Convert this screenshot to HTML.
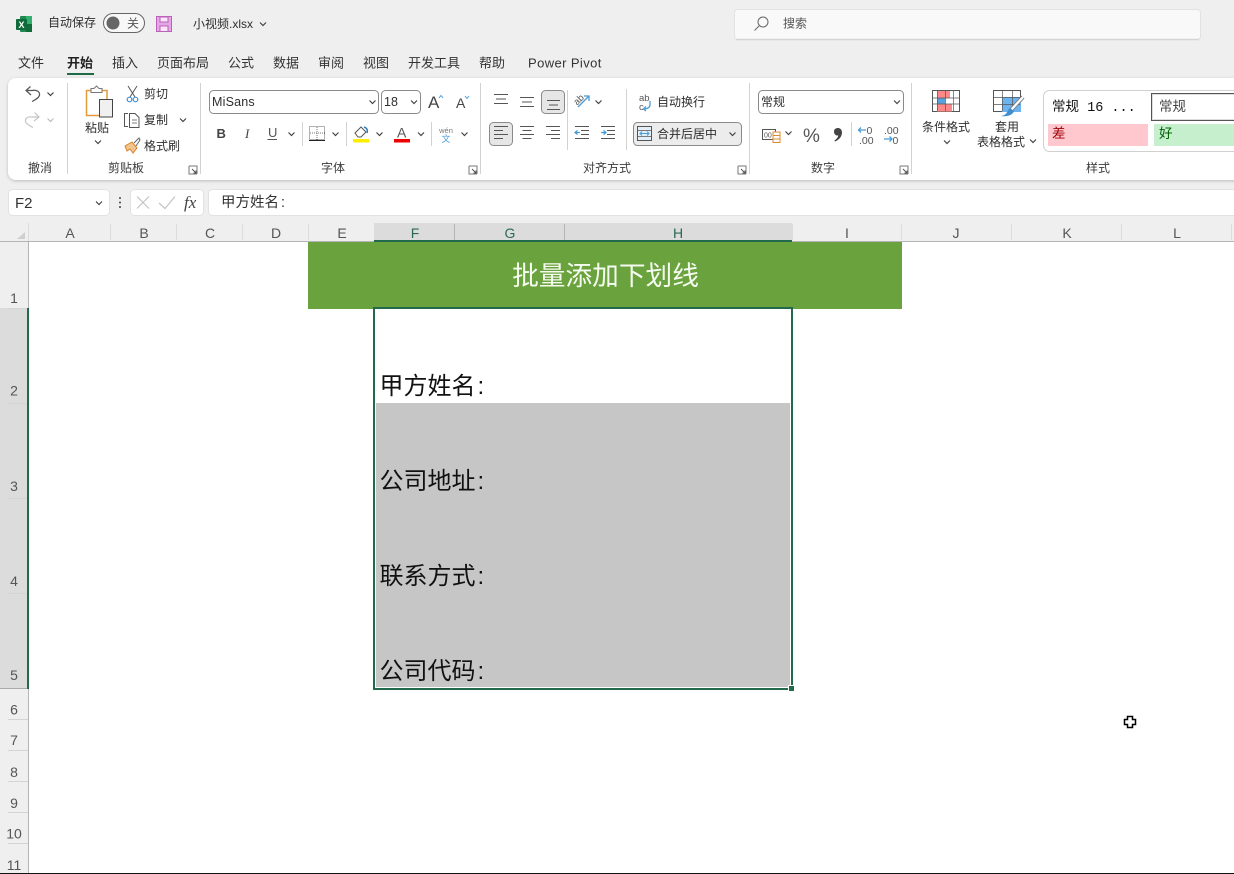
<!DOCTYPE html>
<html lang="zh">
<head>
<meta charset="utf-8">
<title>小视频.xlsx</title>
<style>
html,body{margin:0;padding:0;width:1234px;height:874px;overflow:hidden;background:#efefef}
svg{display:block}
text{font-family:"Liberation Sans","Noto Sans CJK SC",sans-serif;fill:#2e2e2e;font-size:12px;white-space:pre}
.m{font-size:13px;fill:#333}
.g{font-size:12px;fill:#3c3c3c;text-anchor:middle}
.c{font-size:14px;fill:#555;text-anchor:middle}
.s{fill:#2a6a50}
.r{font-size:14px;fill:#555;text-anchor:middle}
.l{fill:none;stroke:#555;stroke-width:1}
.b{fill:none;stroke:#4a9bd8;stroke-width:1.3}
.sep{stroke:#d2d2d2;stroke-width:1}
.big{font-size:24px;fill:#111}
</style>
</head>
<body>
<svg width="1234" height="874" viewBox="0 0 1234 874" xmlns="http://www.w3.org/2000/svg">
<defs>
<path id="ch" d="M-3-1.500 0 1.500 3-1.500" fill="none" stroke="#444" stroke-width="1.200"/>
<path id="lc" d="M-3-1.500 0 1.500 3-1.500" fill="none" stroke="#bbb" stroke-width="1.200"/>
<g id="lau"><path d="M0 0H8V8M0 0V8H8" fill="none" stroke="#777"/><path d="M3 3 7 7M4.500 7H7V4.500" fill="none" stroke="#555"/></g>
<filter id="sh" x="-2%" y="-10%" width="104%" height="125%"><feDropShadow dx="0" dy="1" stdDeviation="1.500" flood-color="#000" flood-opacity=".22"/></filter>
</defs>
<rect width="1234" height="874" fill="#efefef"/>

<!-- title bar -->
<rect x="20" y="16" width="12" height="16" rx="1" fill="#1f8a4f"/>
<rect x="26" y="16" width="6" height="8" fill="#33b070"/>
<rect x="26" y="24" width="6" height="8" fill="#106a3a"/>
<rect x="16" y="19" width="11" height="11" rx="1" fill="#0f6b3c"/>
<text x="18.500" y="28" style="font-size:9px;font-weight:bold;fill:#fff">X</text>
<text x="48" y="26.500">自动保存</text>
<rect x="103.500" y="13.500" width="41" height="19" rx="9.500" fill="#f8f8f8" stroke="#666"/>
<circle cx="113" cy="23" r="6.500" fill="#666"/>
<text x="127" y="27.500" style="font-size:12px;fill:#555">关</text>
<rect x="156.500" y="16.500" width="15" height="15" fill="#e4a6e4" stroke="#bb60bb"/>
<rect x="160" y="17" width="8" height="5" fill="#f8e6f8" stroke="#bb60bb"/>
<rect x="160" y="26" width="8" height="5.500" fill="#f8e6f8" stroke="#bb60bb"/>
<text x="193" y="28" style="font-size:12px">小视频.xlsx</text>
<use href="#ch" x="263" y="24"/>

<rect x="734.500" y="9.500" width="466" height="30" rx="3" fill="#f9f9f9" stroke="#e2e2e2"/>
<path d="M736 39.500H1199" stroke="#d4d4d4" stroke-width="1.500"/>
<circle cx="763" cy="22" r="5" fill="none" stroke="#666"/>
<path d="M759 26 754.500 30.500" stroke="#666"/>
<text x="783" y="27.500" style="fill:#555">搜索</text>

<!-- menu -->
<text class="m" x="18" y="67.500">文件</text>
<text class="m" x="67" y="67.500" style="font-weight:bold;fill:#222">开始</text>
<rect x="67" y="73" width="27" height="2" fill="#1e6b46"/>
<text class="m" x="112" y="67.500">插入</text>
<text class="m" x="157" y="67.500">页面布局</text>
<text class="m" x="228" y="67.500">公式</text>
<text class="m" x="273" y="67.500">数据</text>
<text class="m" x="318" y="67.500">审阅</text>
<text class="m" x="363" y="67.500">视图</text>
<text class="m" x="408" y="67.500">开发工具</text>
<text class="m" x="479" y="67.500">帮助</text>
<text class="m" x="528" y="67.500" style="letter-spacing:.4px">Power Pivot</text>

<!-- ribbon -->
<rect x="8" y="78" width="1240" height="102" rx="8" fill="#fff" filter="url(#sh)"/>
<path class="sep" d="M67.500 83V174M200.500 83V174M480.500 83V174M749.500 83V174M911.500 83V174"/>

<!-- undo -->
<path d="M30.500 86.500 26 90.500 31 95M26 90.500H32C37 89.500 40 92 39.500 95 39 98 35 100 32 101.500" fill="none" stroke="#555" stroke-width="1.200"/>
<use href="#ch" x="50.500" y="94"/>
<path d="M34.500 112.500 39 117 34 121M39 117H32C27 116 25 119 25.500 121.500 26 124 30 126 33 127.500" fill="none" stroke="#c4c4c4" stroke-width="1.200"/>
<use href="#lc" x="50.500" y="120"/>
<text class="g" x="40" y="172">撤消</text>

<!-- paste -->
<rect x="86.500" y="90.500" width="20.500" height="25" fill="#fff" stroke="#e39a3c" stroke-width="1.500"/>
<path d="M91 91V88.500H94L96.500 86 99 88.500H102V92.500H91Z" fill="#fff" stroke="#777"/>
<rect x="99.500" y="99.500" width="13" height="17.500" fill="#f0f0f0" stroke="#444"/>
<text x="85" y="132">粘贴</text>
<use href="#ch" x="98" y="142"/>
<path d="M128 86 135 97M137 86 130 97" stroke="#555" fill="none"/>
<circle cx="129.500" cy="99.500" r="2.300" fill="none" stroke="#3f8fd0" stroke-width="1.200"/>
<circle cx="135.500" cy="99.500" r="2.300" fill="none" stroke="#3f8fd0" stroke-width="1.200"/>
<text x="144" y="98">剪切</text>
<path d="M128 113.500H124.500V126.500H128" class="l"/>
<path d="M129.500 113.500H135L139 117.500V127.500H129.500Z" class="l"/>
<path d="M132 120H137M132 123H137" stroke="#555" stroke-width=".8"/>
<text x="144" y="124">复制</text>
<use href="#ch" x="183" y="120"/>
<path d="M125 146 132 142 137 148 133 153 130 149 127 151Z" fill="#f3c58e" stroke="#d9822b"/>
<path d="M134 143 139 138 140 140 136 146" fill="none" stroke="#666"/>
<text x="144" y="150">格式刷</text>
<text class="g" x="126" y="172">剪贴板</text>
<use href="#lau" x="189" y="166"/>

<!-- font -->
<rect x="209.500" y="90.500" width="169" height="23" rx="4" fill="#fff" stroke="#8a8a8a"/>
<text x="212" y="106" style="font-size:12.500px;letter-spacing:.2px">MiSans</text>
<use href="#ch" x="372.500" y="102"/>
<rect x="381.500" y="90.500" width="39" height="23" rx="4" fill="#fff" stroke="#8a8a8a"/>
<text x="384" y="106" style="font-size:12.500px">18</text>
<use href="#ch" x="414" y="102"/>
<text x="428" y="108" style="font-size:17px;fill:#444">A</text>
<path d="M439 98 441 95.500 443 98" fill="none" stroke="#4a9bd8"/>
<text x="456" y="108" style="font-size:14px;fill:#444">A</text>
<path d="M465 96 467 98.500 469 96" fill="none" stroke="#4a9bd8"/>
<text x="216.500" y="138" style="font-size:13px;font-weight:bold;fill:#444">B</text>
<text x="245" y="138" style="font-size:13px;font-family:'Liberation Serif',serif;font-style:italic;fill:#444">I</text>
<text x="268" y="137" style="font-size:13px;fill:#555">U</text>
<path d="M267.500 139.500H277" stroke="#555"/>
<use href="#ch" x="291.500" y="134"/>
<path class="sep" d="M302.500 122V146M346.500 122V146M431.500 122V146"/>
<rect x="309.500" y="126.500" width="15" height="13" fill="none" stroke="#666" stroke-dasharray="1 1"/>
<path d="M317 127V140M310 133H325" stroke="#777" stroke-dasharray="1 1"/>
<path d="M309 140.500H325" stroke="#222"/>
<use href="#ch" x="335.500" y="134"/>
<path d="M355 133 361 127 366 132 361 137H358Z" fill="#fff" stroke="#555"/>
<path d="M364 127C367 128 368 130 367 133" fill="none" stroke="#2c7fc4" stroke-width="1.500"/>
<rect x="353" y="139" width="16" height="3.500" fill="#ffee00"/>
<use href="#ch" x="379.500" y="134"/>
<text x="397" y="137.500" style="font-size:14px;fill:#555">A</text>
<rect x="394" y="139" width="16" height="3.500" fill="#ee0000"/>
<use href="#ch" x="421" y="134"/>
<text x="446" y="133" style="font-size:7.500px;fill:#777;text-anchor:middle">wén</text>
<text x="446" y="142" style="font-size:9px;fill:#4a9bd8;text-anchor:middle">文</text>
<use href="#ch" x="464.500" y="134"/>
<text class="g" x="333" y="172">字体</text>
<use href="#lau" x="469" y="166"/>

<!-- align -->
<rect x="541.500" y="90.500" width="23" height="23" rx="4" fill="#e6e6e6" stroke="#8a8a8a"/>
<rect x="489.500" y="122.500" width="23" height="23" rx="4" fill="#e6e6e6" stroke="#8a8a8a"/>
<rect x="633.500" y="122.500" width="108" height="23" rx="4" fill="#ececec" stroke="#8a8a8a"/>
<path class="l" d="M494 94.500H508M496 99H506M494 103.500H508M520 97.500H534M522 102H532M520 106.500H534M547 100.500H560M549 105H558M547 109.500H560"/>
<path class="l" d="M494 126.500H508M494 130.500H503M494 134.500H508M494 138.500H503M520 126.500H534M522.500 130.500H531.500M520 134.500H534M522.500 138.500H531.500M546 126.500H560M551 130.500H560M546 134.500H560M551 138.500H560"/>
<path class="sep" d="M567.500 90V150M626.500 89V150"/>
<text x="574" y="102" transform="rotate(-45 580 100)" style="font-size:9.500px;fill:#555">ab</text>
<path class="b" d="M578 107 589 96M584 96H589V101"/>
<use href="#ch" x="598.500" y="102"/>
<path class="l" d="M575 126.500H589M581 130.500H589M581 134.500H589M575 138.500H589M601 126.500H615M607 130.500H615M607 134.500H615M601 138.500H615"/>
<path class="b" d="M580 132.500H575M577.500 130.500 575 132.500 577.500 134.500M601 132.500H606M603.500 130.500 606 132.500 603.500 134.500"/>
<text x="639" y="101" style="font-size:9.500px;fill:#555">ab</text>
<text x="639" y="110" style="font-size:9.500px;fill:#555">c</text>
<path class="b" d="M650 101V105C650 108 646 109 644 109M646 106.500 643.500 109 646 111"/>
<text x="657" y="106">自动换行</text>
<rect x="637.500" y="126.500" width="14" height="14" fill="#e2eef8" stroke="#555"/>
<path d="M638 130.500H651M638 136.500H651" stroke="#555" stroke-width=".8"/>
<path class="b" style="stroke-width:1" d="M640 133.500H649M642 131.500 640 133.500 642 135.500M647 131.500 649 133.500 647 135.500"/>
<text x="657" y="138">合并后居中</text>
<use href="#ch" x="732.500" y="134"/>
<text class="g" x="607" y="172">对齐方式</text>
<use href="#lau" x="738" y="166"/>

<!-- number -->
<rect x="758.500" y="90.500" width="145" height="23" rx="4" fill="#fff" stroke="#8a8a8a"/>
<text x="761" y="106">常规</text>
<use href="#ch" x="897" y="102"/>
<rect x="762.500" y="129.500" width="13" height="10" fill="#fff" stroke="#555"/>
<text x="764" y="137.500" style="font-size:7px;fill:#555">00</text>
<rect x="773" y="132" width="7" height="10.500" fill="#fff" stroke="#e08a2e"/>
<path d="M773 135.500H780M773 139H780" stroke="#e08a2e"/>
<use href="#ch" x="788.500" y="133"/>
<text x="803" y="142" style="font-size:19px;fill:#555">%</text>
<path d="M834 131.500C834 129 836 128 838 128 840.500 128 842 130 842 132.500 842 136.500 839 140 835 141.500L834.500 140.500C836.500 139 838 137.500 838.300 135.500 835.500 135.800 834 134 834 131.500Z" fill="#444"/>
<path class="sep" d="M851.500 122V146"/>
<text x="866.500" y="134" style="font-size:10.500px;fill:#555">0</text>
<text x="859" y="144" style="font-size:10.500px;fill:#555">.00</text>
<path class="b" d="M866 130H858.500M861 127.500 858.500 130 861 132.500"/>
<text x="884" y="134" style="font-size:10.500px;fill:#555">.00</text>
<text x="892.500" y="144" style="font-size:10.500px;fill:#555">0</text>
<path class="b" d="M884 139H892M889.500 136.500 892 139 889.500 141.500"/>
<text class="g" x="823" y="172">数字</text>
<use href="#lau" x="900" y="166"/>

<!-- cond format -->
<rect x="932.500" y="90.500" width="27" height="21" fill="#fff" stroke="#555"/>
<rect x="937" y="91" width="13" height="7" fill="#f88"/>
<rect x="937" y="98" width="8" height="6" fill="#5aa2dc"/>
<rect x="937" y="104" width="15" height="7.500" fill="#f88"/>
<path d="M937.500 91V111M945.500 91V111M953.500 91V111M933 98H959M933 104H959" stroke="#555" stroke-width=".7" fill="none"/>
<text x="922" y="131">条件格式</text>
<use href="#ch" x="947" y="142"/>

<!-- table format -->
<rect x="993.500" y="90.500" width="27" height="21" fill="#fff" stroke="#555"/>
<rect x="1002" y="97" width="19" height="15" fill="#6db3ee"/>
<path d="M1002.500 91V111M1012.500 91V111M994 97.500H1020M994 104.500H1020" stroke="#555" stroke-width=".7" fill="none"/>
<path d="M1023 97 1011 110" stroke="#777" stroke-width="4"/>
<path d="M1023 97 1011 110" stroke="#fff" stroke-width="2.300"/>
<path d="M1010 108C1007 110 1008 115 1001 116 1007 117 1013 115 1014 111Z" fill="#3f8fd0"/>
<text x="995" y="131">套用</text>
<text x="977" y="146">表格格式</text>
<use href="#ch" x="1033" y="141"/>

<!-- styles -->
<rect x="1043.500" y="90.500" width="200" height="61" rx="6" fill="#fff" stroke="#d0d0d0"/>
<text x="1052" y="111" style="font-family:'Liberation Mono','Noto Sans CJK SC',monospace;font-size:13.500px;fill:#111">常规 16 ...</text>
<rect x="1151.500" y="93.500" width="90" height="27" fill="#fff" stroke="#555"/>
<rect x="1152.500" y="94.500" width="88" height="25" fill="none" stroke="#ddd"/>
<text x="1159" y="111" style="font-size:13.500px;fill:#444">常规</text>
<rect x="1048" y="124" width="100" height="22" fill="#ffc7ce"/>
<text x="1052" y="138" style="font-size:13.500px;fill:#9c0006">差</text>
<rect x="1154" y="124" width="80" height="22" fill="#c6efce"/>
<text x="1159" y="138" style="font-size:13.500px;fill:#006100">好</text>
<text class="g" x="1098" y="172">样式</text>

<!-- formula bar -->
<rect x="8.500" y="189.500" width="101" height="26" rx="4" fill="#fff" stroke="#e2e2e2"/>
<text x="15" y="208" style="font-size:15px;fill:#333">F2</text>
<use href="#ch" x="99" y="203"/>
<circle cx="120" cy="198" r="1" fill="#444"/><circle cx="120" cy="202.500" r="1" fill="#444"/><circle cx="120" cy="207" r="1" fill="#444"/>
<rect x="130.500" y="189.500" width="73" height="26" rx="4" fill="#fff" stroke="#e2e2e2"/>
<path d="M137 196.500 149 208.500M149 196.500 137 208.500" stroke="#c4c4c4" stroke-width="1.200"/>
<path d="M159 203 165 208.500 175 196.500" fill="none" stroke="#c4c4c4" stroke-width="1.200"/>
<text x="184" y="208" style="font-family:'Liberation Serif',serif;font-style:italic;font-size:17px;fill:#444">fx</text>
<rect x="208.500" y="189.500" width="1040" height="26" rx="4" fill="#fff" stroke="#e2e2e2"/>
<text x="221" y="207" style="font-size:14.500px;fill:#333">甲方姓名<tspan dx="2">:</tspan></text>

<!-- grid -->
<rect x="29" y="242" width="1205" height="632" fill="#fff"/>
<rect x="0" y="223" width="1234" height="18" fill="#efefef"/>
<rect x="0" y="242" width="28" height="632" fill="#efefef"/>
<rect x="374" y="223" width="418" height="17" fill="#dcdcdc"/>
<rect x="0" y="308" width="27" height="380" fill="#dcdcdc"/>
<path d="M28.500 223V241M110.500 224V240M176.500 224V240M242.500 224V240M308.500 224V240M374.500 224V240M792.500 224V240M901.500 224V240M1011.500 224V240M1121.500 224V240M1231.500 224V240" stroke="#dcdcdc"/>
<path d="M454.500 224V240M564.500 224V240" stroke="#b4b4b4"/>
<path d="M0 241.500H1234" stroke="#b4b4b4"/>
<path d="M28.500 242V308M28.500 688V873" stroke="#b4b4b4"/>
<path d="M8 403.500H27M8 498.500H27M8 593.500H27M8 308.500H27M8 719.500H28M8 750.500H28M8 781.500H28M8 812.500H28M8 843.500H28" stroke="#d4d4d4"/>
<path d="M0 688.500H28" stroke="#aaa"/>
<path d="M25 232V239H17Z" fill="#cfcfcf"/>

<rect x="374" y="240" width="418" height="2" fill="#23694b"/>
<rect x="27" y="308" width="2" height="381" fill="#23694b"/>

<text class="c" x="70" y="238">A</text>
<text class="c" x="144" y="238">B</text>
<text class="c" x="210" y="238">C</text>
<text class="c" x="276" y="238">D</text>
<text class="c" x="342" y="238">E</text>
<text class="c s" x="415" y="238">F</text>
<text class="c s" x="510" y="238">G</text>
<text class="c s" x="678" y="238">H</text>
<text class="c" x="847" y="238">I</text>
<text class="c" x="956" y="238">J</text>
<text class="c" x="1067" y="238">K</text>
<text class="c" x="1177" y="238">L</text>

<text class="r" x="14" y="303">1</text>
<text class="r s" x="14" y="395.500">2</text>
<text class="r s" x="14" y="491">3</text>
<text class="r s" x="14" y="586">4</text>
<text class="r s" x="14" y="680">5</text>
<text class="r" x="14" y="714.500">6</text>
<text class="r" x="14" y="745">7</text>
<text class="r" x="14" y="777">8</text>
<text class="r" x="14" y="808">9</text>
<text class="r" x="14" y="838.500">10</text>
<text class="r" x="14" y="870">11</text>

<!-- cells -->
<rect x="308" y="242" width="594" height="67" fill="#6aa23e"/>
<text x="605.500" y="285" style="font-size:26.700px;fill:#f6fbf0;text-anchor:middle">批量添加下划线</text>
<rect x="374" y="308" width="418" height="381" fill="#fff"/>
<rect x="376" y="403" width="414" height="284" fill="#c6c6c6"/>
<text class="big" x="379.500" y="394">甲方姓名<tspan dx="2">:</tspan></text>
<text class="big" x="379.500" y="489">公司地址<tspan dx="2">:</tspan></text>
<text class="big" x="379.500" y="584">联系方式<tspan dx="2">:</tspan></text>
<text class="big" x="379.500" y="679">公司代码<tspan dx="2">:</tspan></text>
<rect x="374" y="308" width="418" height="381" fill="none" stroke="#23694b" stroke-width="2"/>
<rect x="788" y="685" width="7" height="7" fill="#fff"/>
<rect x="789" y="686" width="5" height="5" fill="#23694b"/>

<!-- cursor -->
<path d="M1127.500 716.500H1132.500V719.500H1135.500V724.500H1132.500V727.500H1127.500V724.500H1124.500V719.500H1127.500Z" fill="#fff" stroke="#000" stroke-width="1.500"/>

<rect x="0" y="873" width="1234" height="1" fill="#111"/>
</svg>
</body>
</html>
